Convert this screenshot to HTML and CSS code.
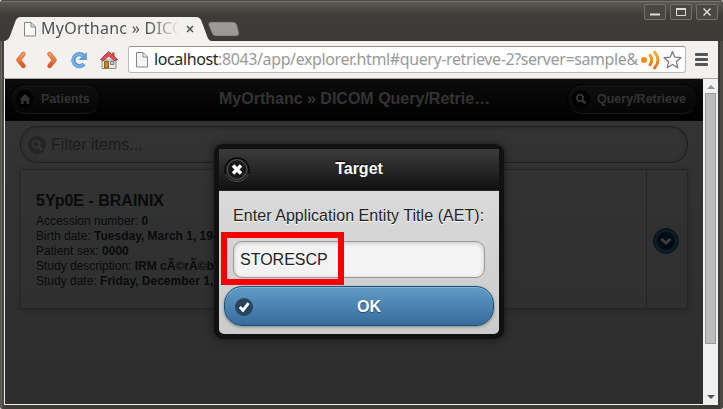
FILE: index.html
```html
<!DOCTYPE html>
<html lang="en">
<head>
<meta charset="utf-8">
<title>MyOrthanc » DICOM Query/Retrieve</title>
<link rel="stylesheet" href="styles.css">
</head>
<body>
<div class="window">
  <header class="titlebar">
    <div class="tabs">
      <div class="tab">
        <svg class="tab-shape" width="240" height="24" viewBox="0 0 240 24"><path d="M0 24C3 23 4 21 5 19L10.500 4Q12 0 16 0H191Q195 0 196.500 4L202 19C203 22 204 23 206 24Z" fill="#f2f1f0"/><path d="M203.500 8Q203 5 206 5H228Q231 5 232 8L234 16Q234.500 19 231 19H211Q208 19 207 16Z" fill="#9b9a98" stroke="#55534d" stroke-width=".6"/></svg>
        <svg class="tab-page" width="12" height="15" viewBox="0 0 12 15"><path d="M.5.5H7L11.500 5V14H.5ZM7 .5V5H11.500" fill="#fafafa" stroke="#858585"/></svg>
        <span class="tab-title">MyOrthanc » DICO</span>
        <svg class="tab-close" width="8" height="8" viewBox="0 0 8 8"><path d="M1 1L7 7M7 1L1 7" stroke="#555" stroke-width="1.600"/></svg>
      </div>
    </div>
    <div class="win-buttons">
      <span class="win-button"><svg width="20" height="14" viewBox="0 0 20 14"><path d="M5 9.500H15" stroke="#dfdbd2" stroke-width="2"/></svg></span>
      <span class="win-button"><svg width="20" height="14" viewBox="0 0 20 14"><path d="M5.500 4V10.500H14.500V4" fill="none" stroke="#dfdbd2"/><path d="M5 4H15" stroke="#dfdbd2" stroke-width="2"/></svg></span>
      <span class="win-button"><svg width="20" height="14" viewBox="0 0 20 14"><path d="M6.500 3.500L13.500 10.500M13.500 3.500L6.500 10.500" stroke="#dfdbd2" stroke-width="1.500"/></svg></span>
    </div>
  </header>
  <nav class="toolbar">
    <svg class="nav-icons" width="120" height="36" viewBox="0 0 120 36">
      <defs><linearGradient id="orange" x2="0" y2="1"><stop stop-color="#f6a05a"/><stop offset="1" stop-color="#e4521b"/></linearGradient><linearGradient id="signal" x2="0" y2="1"><stop stop-color="#fbb02c"/><stop offset="1" stop-color="#ee6a14"/></linearGradient></defs>
      <path d="M19.500 12L14.500 18L19.500 24" fill="none" stroke="#d9662f" stroke-width="4.400" stroke-linecap="round" stroke-linejoin="round"/>
      <path d="M19.500 12L14.500 18L19.500 24" fill="none" stroke="url(#orange)" stroke-width="3" stroke-linecap="round" stroke-linejoin="round"/>
      <path d="M45.500 12L50.500 18L45.500 24" fill="none" stroke="#d9662f" stroke-width="4.400" stroke-linecap="round" stroke-linejoin="round"/>
      <path d="M45.500 12L50.500 18L45.500 24" fill="none" stroke="url(#orange)" stroke-width="3" stroke-linecap="round" stroke-linejoin="round"/>
      <path d="M79.500 13.800A6 6 0 1 0 80 22" fill="none" stroke="#5590cf" stroke-width="4.200"/>
      <path d="M79 14A6 6 0 1 0 79.500 22" fill="none" stroke="#78afe4" stroke-width="2.500"/>
      <path d="M82.800 10V18H74.500Z" fill="#629cd9"/>
      <path d="M98 18H112V26.500H98Z" fill="#e9e6df" stroke="#8f8c84"/>
      <path d="M100.500 19.500H104.500V26H100.500Z" fill="#c98a22" stroke="#81602b"/><path d="M106.500 19.500H110V22.500H106.500Z" fill="#b9c8d7" stroke="#77828b"/>
      <path d="M108 10.500H110.500V15H108Z" fill="#d54a4a"/><path d="M96.500 17.500L104.700 9.500L113.500 17.500L111 19L104.800 14L99 19Z" fill="#d95353" stroke="#b73b3f"/>
    </svg>
    <div class="address">
      <svg class="address-page" width="12" height="16" viewBox="0 0 12 16"><path d="M.5.500H7L11.500 5V15H.5ZM7 .5V5H11.500" fill="#f4f4f4" stroke="#858585"/></svg>
      <span class="url"><b>localhost</b>:8043/app/explorer.html#query-retrieve-2?server=sample&amp;</span>
      <svg class="address-icons" width="42" height="24" viewBox="0 0 42 24">
        <circle cx="3" cy="12" r="3" fill="#f08a1d"/>
        <path d="M9 7.200Q12.500 12 9 16.800M13.500 4Q20.500 12 13.500 20" fill="none" stroke="url(#signal)" stroke-width="3" stroke-linecap="round"/>
        <path d="M31.500 3.500L33.900 9.200L40 9.700L35.300 13.700L36.900 19.800L31.500 16.500L26.100 19.800L27.700 13.700L23 9.700L29.100 9.200Z" fill="#fff" stroke="#777" stroke-width="1.200" stroke-linejoin="round"/>
      </svg>
    </div>
    <span class="menu"><i></i><i></i><i></i></span>
  </nav>
  <div class="viewport">
    <main class="page">
      <div class="page-header">
        <span class="nav-button"><svg class="disc" width="18" height="18" viewBox="0 0 18 18"><circle cx="9" cy="9" r="9" fill="#020202"/><path d="M3.500 9.500L9 4L14.500 9.500H13V14H10.500V11H7.500V14H5V9.500Z" fill="#343434"/></svg>Patients</span>
        <h1 class="page-title">MyOrthanc » DICOM Query/Retrie…</h1>
        <span class="nav-button nav-query"><svg class="disc" width="18" height="18" viewBox="0 0 18 18"><circle cx="9" cy="9" r="9" fill="#020202"/><circle cx="8" cy="8" r="3.200" fill="none" stroke="#343434" stroke-width="2"/><path d="M10.500 10.500L13.500 13.500" stroke="#343434" stroke-width="2.500"/></svg>Query/Retrieve</span>
      </div>
      <div class="filter"><svg width="18" height="18" viewBox="0 0 18 18"><circle cx="9" cy="9" r="9" fill="#252525"/><circle cx="8" cy="8" r="3.500" fill="none" stroke="#363636" stroke-width="2"/><path d="M10.500 10.500L14 14" stroke="#363636" stroke-width="2.500"/></svg>Filter items...</div>
      <section class="study">
        <div class="study-info">
          <h2>5Yp0E - BRAINIX</h2>
          <p>Accession number: <b>0</b></p>
          <p>Birth date: <b>Tuesday, March 1, 1949</b></p>
          <p>Patient sex: <b>0000</b></p>
          <p>Study description: <b>IRM cÃ©rÃ©brale</b></p>
          <p>Study date: <b>Friday, December 1, 2006</b></p>
        </div>
        <div class="study-action"><svg width="28" height="28" viewBox="0 0 28 28"><circle cx="13" cy="14" r="12.500" fill="#0e1c28" stroke="#07121b"/><circle cx="13" cy="14" r="9" fill="#040b13"/><path d="M8.500 12L13 16L17.500 12" fill="none" stroke="#3c3f42" stroke-width="3"/></svg></div>
      </section>
    </main>
    <aside class="scrollbar"><i class="arrow-up"></i><i class="thumb"></i><i class="arrow-down"></i></aside>
  </div>
  <div class="dialog">
    <div class="dialog-header">
      <svg class="dialog-close" width="28" height="28" viewBox="0 0 28 28"><circle cx="14" cy="14" r="12" fill="#242424" stroke="#090909" stroke-width="1.500"/><path d="M2.500 18A12.500 12.500 0 0 0 25.500 18" fill="none" stroke="#555"/><circle cx="14" cy="13.500" r="9.800" fill="none" stroke="#555"/><circle cx="14" cy="13.500" r="8.800" fill="#171717"/><path d="M10 9.500L18 17.500M18 9.500L10 17.500" stroke="#fff" stroke-width="3.500"/></svg>
      Target
    </div>
    <div class="dialog-body">
      <label for="aet">Enter Application Entity Title (AET):</label>
      <div class="field"><input id="aet" type="text" value="STORESCP"><span class="highlight"></span></div>
      <button class="ok" type="button"><svg width="18" height="18" viewBox="0 0 18 18"><circle cx="9" cy="9" r="9" fill="#28445f"/><path d="M4.800 9L8 12.300L13.500 5.200" fill="none" stroke="#fff" stroke-width="2.800"/></svg>OK</button>
    </div>
  </div>
</div>
</body>
</html>
```
FILE: styles.css
```css
* { box-sizing: border-box; }
body { margin: 0; background: #fff; font-family: "Liberation Sans", Arial, sans-serif; }
.window { position: relative; width: 723px; height: 409px; overflow: hidden; display: flex; flex-direction: column; padding: 0 5px 4px 4px; border-radius: 3px 3px 2px 2px; background: linear-gradient(90deg, #55534d 0 1px, #6b6962 1px 2px, #45433d 2px 4px, #3c3b37 4px 720px, #4b4943 720px); }
.titlebar { flex: none; height: 41px; margin: 0 -5px 0 -4px; display: flex; justify-content: space-between; border-top: 1px solid #4b4a45; background: linear-gradient(#77756f 0 1px, #5a5851 1px, #3d3c38 15px, #3c3b37); }
.tabs { padding: 16px 0 0 5px; }
.tab { position: relative; width: 240px; height: 24px; display: flex; align-items: center; padding-left: 19px; }
.tab > * { position: relative; flex: none; }
.tab .tab-shape { position: absolute; left: 0; top: 0; }
.tab-title { width: 141px; margin: -2px 0 0 5px; overflow: hidden; white-space: nowrap; font: 16px/24px "Noto Sans", sans-serif; letter-spacing: .25px; color: transparent; background: linear-gradient(90deg, #4c4c4c 108px, #f2f1f0 138px); background-clip: text; -webkit-background-clip: text; }
.tab-close { margin-left: 4px; }
.win-buttons { display: flex; gap: 4px; padding: 3px 5px 0 0; }
.win-button { width: 22px; height: 16px; border: 1px solid #73716b; border-radius: 2px; background: #494741; }
.win-button svg { display: block; }
.toolbar { flex: none; height: 38px; display: flex; align-items: center; background: #f2f1f0; border-bottom: 1px solid #aaa8a5; }
.nav-icons { flex: none; width: 120px; margin-right: 4px; }
.address { flex: none; width: 558px; height: 27px; display: flex; align-items: center; padding-left: 7px; background: #fff; border: 1px solid #bab8b5; border-top-color: #969491; border-radius: 3px; }
.address-page { flex: none; margin-right: 6px; }
.url { width: 486px; flex: none; overflow: hidden; white-space: nowrap; font: 16px/24px "Noto Sans", sans-serif; letter-spacing: -.39px; color: #999; margin-top: -2px; }
.url b { font-weight: 400; color: #262626; }
.address-icons { flex: none; margin-left: 1px; }
.menu { display: flex; flex-direction: column; gap: 2px; margin-left: 9px; }
.menu i { width: 13px; height: 3px; border-radius: 1px; background: #555; }
.viewport { flex: none; height: 326px; display: flex; background: #f2f1f0; border-left: 1px solid #f2f1f0; border-bottom: 1px solid #f2f1f0; }
.page { width: 698px; height: 325px; background: linear-gradient(#343434, #2e2e2e 90%); color: #090b0c; }
.page-header { height: 42px; display: flex; align-items: center; padding: 0 5px 1px; background: linear-gradient(#0c0c0c, #000); border-bottom: 1px solid #070707; font-weight: 700; color: #333; }
.nav-button { flex: none; width: 91px; height: 30px; display: flex; align-items: center; gap: 7px; padding-left: 5px; border: 1px solid #020202; border-bottom-color: #181818; border-radius: 15px; background: linear-gradient(#0f0f0f, #050505); font-size: 12.500px; box-shadow: inset 0 1px #141414; }
.nav-button.nav-query { width: 131px; padding-left: 4px; margin-right: 0; gap: 7px; }
.disc { flex: none; }
.page-title { flex: 1; margin: 0 0 0 118px; font-size: 16px; white-space: nowrap; color: #333; }
.filter { width: 668px; height: 37px; margin: 5px 0 0 15px; display: flex; align-items: center; gap: 5px; padding-left: 7px; border: 1px solid #1f1f1f; border-radius: 17px; font-size: 16px; color: #1c1c1c; box-shadow: inset 0 1px 4px #292929; }
.study { width: 668px; height: 140px; margin: 6px 0 0 15px; display: flex; border: 1px solid #262626; box-shadow: 0 1px 4px #252525; }
.study-info { width: 626px; padding: 21px 15px 0; border-right: 1px solid #242424; }
.study h2 { margin: 0 0 3px; font-size: 16px; line-height: 20px; }
.study p { margin: 0; font-size: 12px; line-height: 15px; }
.study-action { display: flex; flex: 1; align-items: center; justify-content: center; padding-top: 3px; }
.scrollbar { width: 15px; display: flex; flex-direction: column; align-items: center; background: #f0f0f0; }
.arrow-up, .arrow-down { width: 0; height: 0; border: 4px solid transparent; border-top-width: 0; border-bottom: 4px solid #929292; margin-top: 6px; }
.thumb { width: 11px; height: 251px; margin-top: 4px; border: 1px solid #999; background: #bcbcbc; }
.arrow-down { border-top: 4px solid #555; border-bottom-width: 0; margin-top: 51px; }
.dialog { position: absolute; left: 214px; top: 144px; width: 290px; height: 195px; border: 5px solid #111; border-radius: 9px; background: #111; box-shadow: 0 0 8px rgba(0,0,0,.55); }
.dialog-header { height: 42px; display: flex; align-items: center; justify-content: center; position: relative; padding-bottom: 2px; border-bottom: 1px solid #292929; background: linear-gradient(#3c3c3c, #111); color: #fff; font-size: 16px; font-weight: 700; text-shadow: 0 -1px 1px #000; }
.dialog-close { position: absolute; left: 4px; top: 7px; }
.dialog-body { height: 143px; padding: 13px 5px 8px; border-radius: 0 0 5px 5px; background: linear-gradient(#dadada, #cbcbcb); color: #222; }
.dialog-body label { display: block; margin-left: 9px; height: 37px; line-height: 24px; font-size: 16px; letter-spacing: .06px; white-space: nowrap; text-shadow: 0 1px #fff; }
.field { position: relative; width: 252px; height: 37px; margin-left: 9px; }
.field input { display: block; width: 252px; height: 37px; padding: 0 6px; border: 1px solid #999; border-radius: 9px; background: #f3f3f3; box-shadow: inset 0 1px 4px rgba(0,0,0,.2); color: #222; font: 16px "Liberation Sans", sans-serif; text-shadow: 0 1px #fff; outline: 0; }
.highlight { position: absolute; left: -12px; top: -9px; width: 123px; height: 53px; border: 6px solid #f80000; }
.ok { width: 270px; height: 40px; display: flex; align-items: center; margin: 8px 0 0; padding: 2px 18px 0 10px; border: 1px solid #145072; border-radius: 18px; background: linear-gradient(#5f9cc5, #396b9e); box-shadow: inset 0 1px #83b7d8, 0 1px 3px rgba(0,0,0,.35); color: #fff; font: 700 16px "Liberation Sans", sans-serif; text-shadow: 0 1px 1px #194b7e; }
.ok svg { margin-right: 104px; }
```
